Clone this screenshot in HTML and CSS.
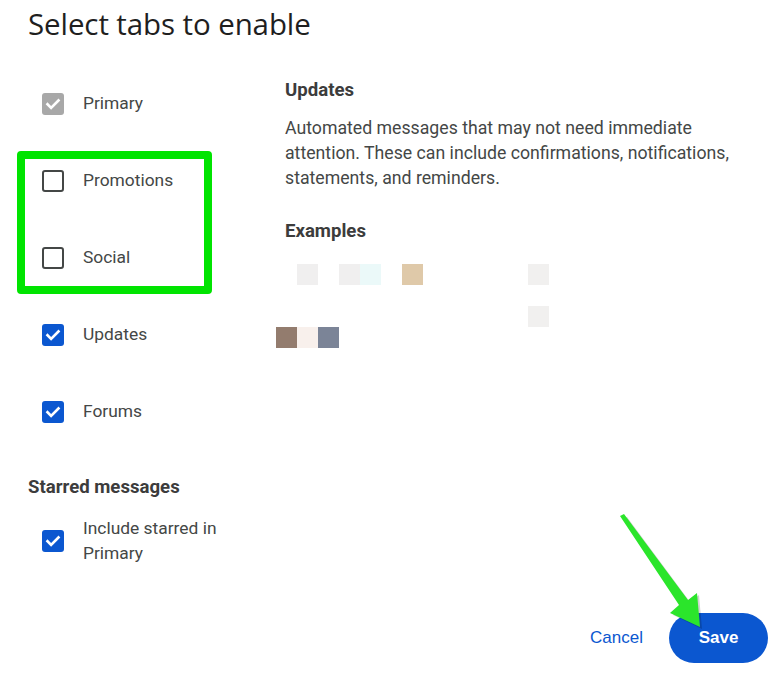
FILE: index.html
```html
<!DOCTYPE html>
<html lang="en">
<head>
<meta charset="utf-8">
<title>Select tabs to enable</title>
<link rel="stylesheet" href="styles.css">
</head>
<body>
<div class="dialog">
  <h1 class="title">Select tabs to enable</h1>
  <div class="content">
    <div class="left">
      <div class="tabs">
        <div class="row"><span class="cb cb-disabled"><svg viewBox="0 0 22 22"><path d="M5.5 11.2l3.6 3.6 7.4-7.4" /></svg></span><span class="label">Primary</span></div>
        <div class="row"><span class="cb cb-empty"></span><span class="label">Promotions</span></div>
        <div class="row"><span class="cb cb-empty"></span><span class="label">Social</span></div>
        <div class="row"><span class="cb cb-on"><svg viewBox="0 0 22 22"><path d="M5.5 11.2l3.6 3.6 7.4-7.4" /></svg></span><span class="label">Updates</span></div>
        <div class="row"><span class="cb cb-on"><svg viewBox="0 0 22 22"><path d="M5.5 11.2l3.6 3.6 7.4-7.4" /></svg></span><span class="label">Forums</span></div>
        <div class="highlight"></div>
      </div>
      <h2 class="sub">Starred messages</h2>
      <div class="row row-multi"><span class="cb cb-on"><svg viewBox="0 0 22 22"><path d="M5.5 11.2l3.6 3.6 7.4-7.4" /></svg></span><span class="label">Include starred in<br>Primary</span></div>
    </div>
    <div class="right">
      <h2 class="head">Updates</h2>
      <p class="desc">Automated messages that may not need immediate attention. These can include confirmations, notifications, statements, and reminders.</p>
      <h2 class="head head-ex">Examples</h2>
      <div class="pixels">
        <span class="px p1"></span>
        <span class="px p2"></span>
        <span class="px p3"></span>
        <span class="px p4"></span>
        <span class="px p5"></span>
        <span class="px p6"></span>
        <span class="px p7"></span>
        <span class="px p8"></span>
        <span class="px p9"></span>
      </div>
    </div>
  </div>
  <div class="actions">
    <button class="btn-text">Cancel</button>
    <button class="btn-fill">Save</button>
  </div>
</div>
<svg class="arrow" viewBox="600 500 120 140" width="120" height="140">
  <polygon class="arrow-shadow" points="623,519 627,517 690,602 699,595 702,629 673,615 682,607" />
  <polygon class="arrow-body" points="620,516 624,514 688,600 697,593 700,627 670,613 679,605" />
</svg>
</body>
</html>
```
FILE: styles.css
```css
* { box-sizing: border-box; }
html, body { margin: 0; padding: 0; background: #fff; }
body {
  width: 781px;
  height: 676px;
  overflow: hidden;
  position: relative;
  font-family: Roboto, "Noto Sans", "Liberation Sans", sans-serif;
  color: #444746;
}
.dialog {
  padding: 0 13px 0 28px;
  height: 676px;
  display: flex;
  flex-direction: column;
}
.title {
  margin: 0;
  font-family: "Open Sans", Roboto, sans-serif;
  font-weight: 400;
  font-size: 29.5px;
  line-height: 48px;
  color: #1f1f1f;
  letter-spacing: -0.1px;
}
.content {
  display: grid;
  grid-template-columns: 257px 1fr;
}
.left { padding-top: 17px; }
.tabs { position: relative; }
.row {
  height: 77px;
  display: flex;
  align-items: center;
  padding-left: 14px;
}
.cb {
  width: 22px;
  height: 22px;
  border-radius: 3px;
  flex: none;
  display: flex;
  align-items: center;
  justify-content: center;
}
.cb svg { width: 22px; height: 22px; }
.cb path { fill: none; stroke: #fff; stroke-width: 2.6; stroke-linecap: square; }
.cb-disabled { background: #a8a8a8; }
.cb-on { background: #0b57d0; }
.cb-empty { border: 2.4px solid #444746; border-radius: 3px; }
.label {
  margin-left: 19px;
  font-size: 17.4px;
  line-height: 25px;
  color: #444746;
}
.highlight {
  position: absolute;
  left: -11px;
  top: 86px;
  width: 195px;
  height: 143px;
  border: 8px solid #00e400;
  border-radius: 4px;
}
.sub {
  margin: 0;
  font-size: 18.6px;
  font-weight: 700;
  line-height: 25px;
  color: #3c3c3c;
  padding-top: 25px;
}
.row-multi {
  height: auto;
  padding-top: 16px;
}
.right { padding-top: 30px; }
.head {
  margin: 0;
  font-size: 18.6px;
  font-weight: 700;
  line-height: 25px;
  color: #3c3c3c;
}
.desc {
  margin: 13px 0 0;
  font-size: 17.7px;
  line-height: 25px;
  color: #444746;
  max-width: 452px;
}
.head-ex { margin-top: 28px; }
.pixels {
  margin-top: 20px;
  margin-left: -9px;
  display: grid;
  grid-template-columns: repeat(13, 21px);
  grid-template-rows: repeat(4, 21px);
}
.p1 { grid-column: 2; grid-row: 1; background: #f0efef; }
.p2 { grid-column: 4; grid-row: 1; background: #f0efef; }
.p3 { grid-column: 5; grid-row: 1; background: #ebf9f9; }
.p4 { grid-column: 7; grid-row: 1; background: #dfc9a9; }
.p5 { grid-column: 13; grid-row: 1; background: #f1f0ef; }
.p6 { grid-column: 13; grid-row: 3; background: #f1f0ef; }
.p7 { grid-column: 1; grid-row: 4; background: #937c6e; }
.p8 { grid-column: 2; grid-row: 4; background: #f8f0ec; }
.p9 { grid-column: 3; grid-row: 4; background: #7b8497; }
.actions {
  margin-top: auto;
  margin-bottom: 13px;
  display: flex;
  justify-content: flex-end;
  align-items: center;
  gap: 4px;
}
.btn-text, .btn-fill {
  font-family: "Liberation Sans", Arial, sans-serif;
  font-size: 17px;
  border: none;
  height: 50px;
  cursor: pointer;
}
.btn-text {
  background: none;
  color: #0b57d0;
  padding: 0 22px;
}
.btn-fill {
  background: #0b57d0;
  color: #fff;
  font-weight: 700;
  width: 99px;
  border-radius: 25px;
}
.arrow {
  position: absolute;
  left: 600px;
  top: 500px;
}
.arrow-shadow { fill: rgba(0,0,0,0.18); }
.arrow-body { fill: #2be52b; }
```
